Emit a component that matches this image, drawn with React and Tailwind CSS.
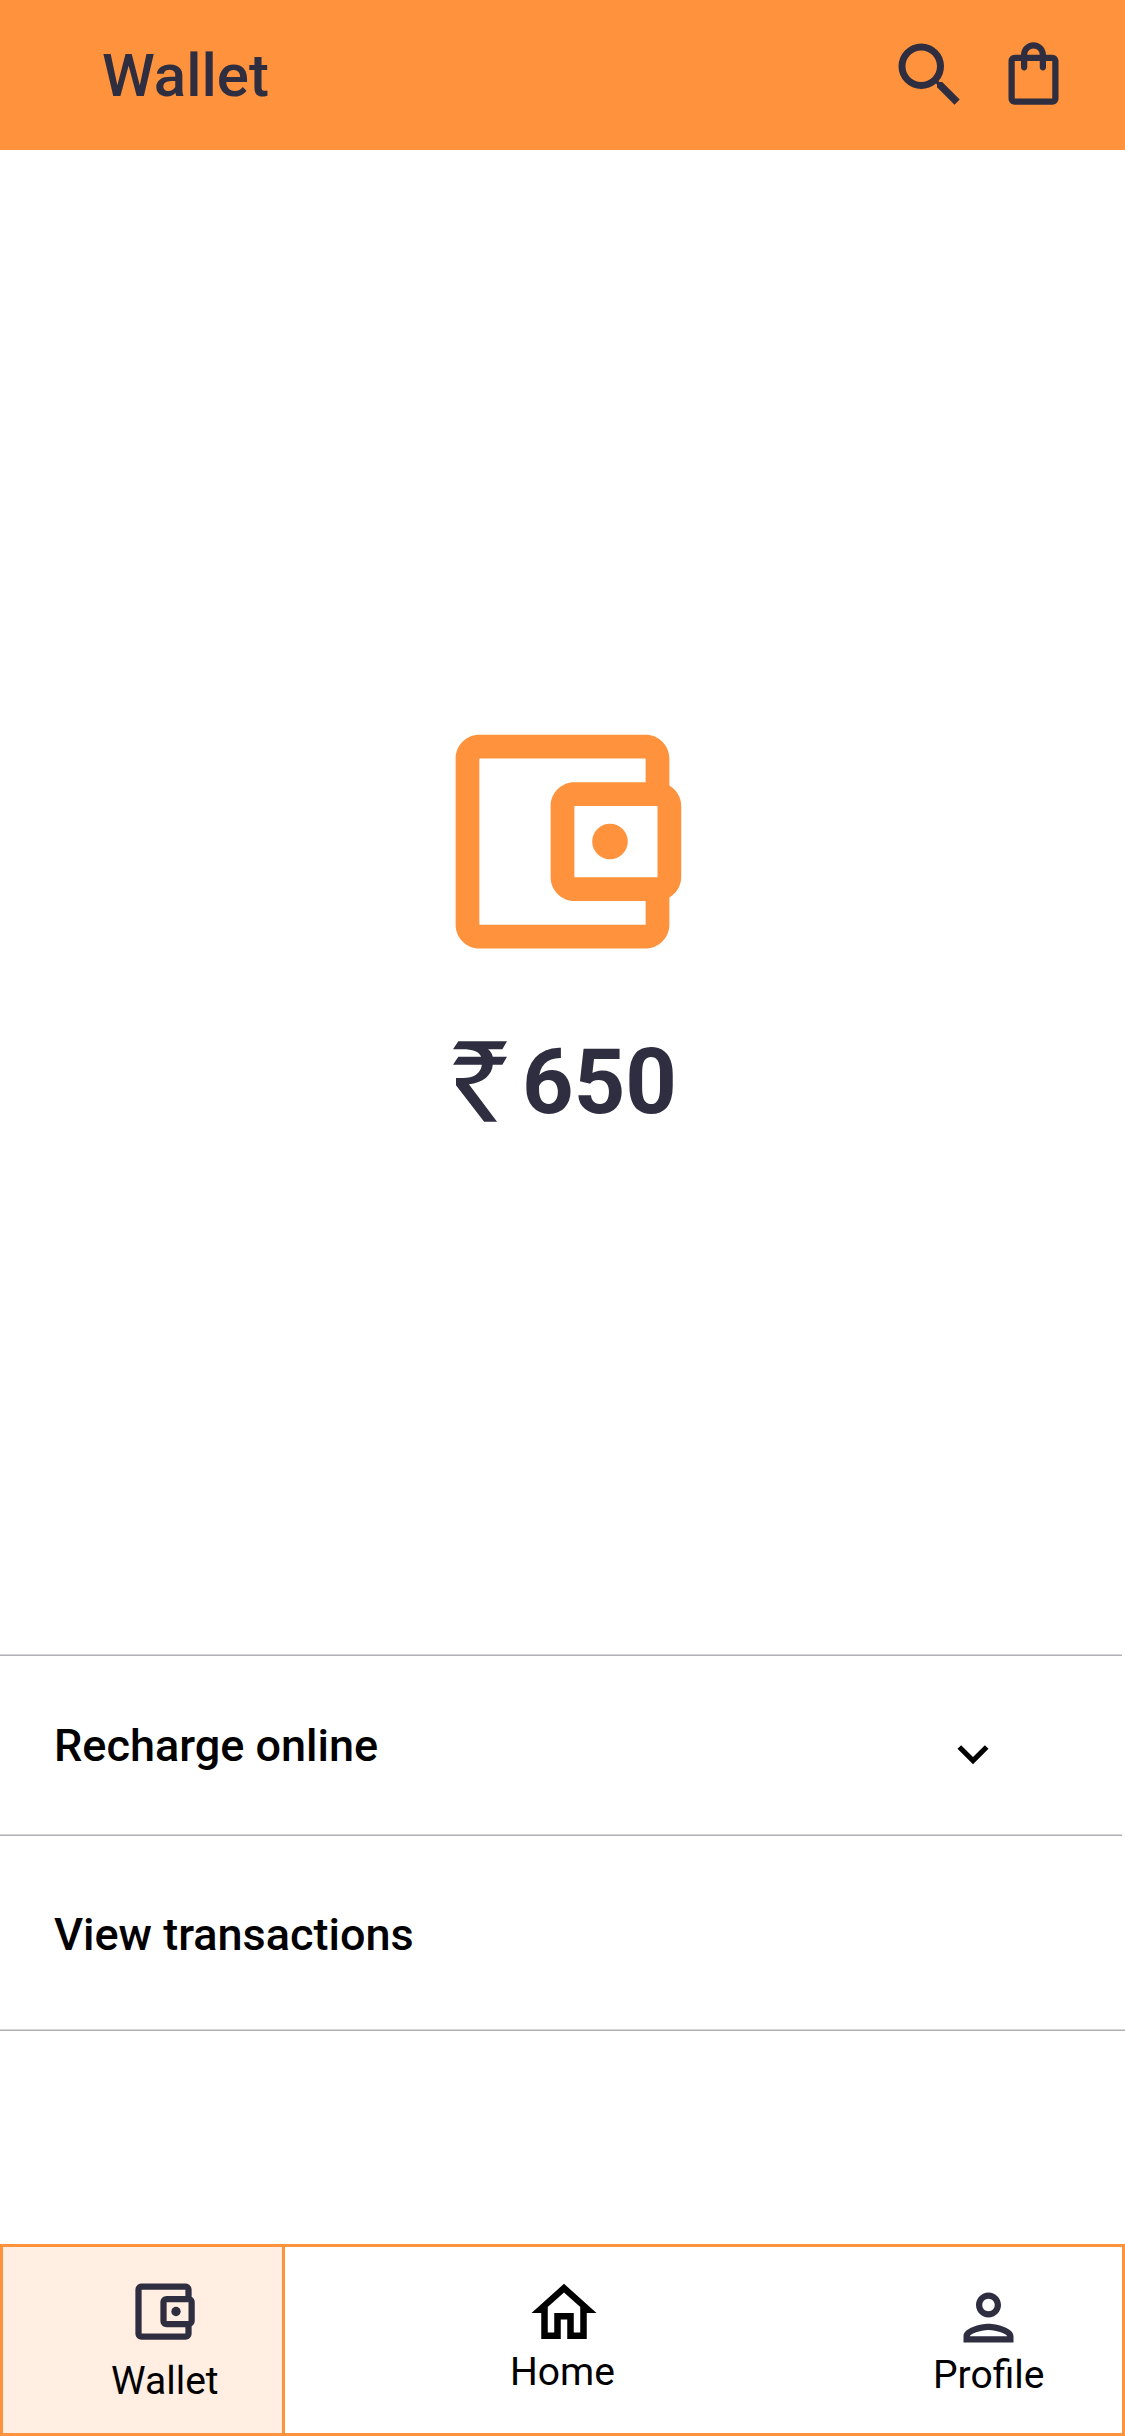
import React from 'react';

const WalletIcon = ({ className }) => (
    <svg viewBox="0 0 24 24" fill="currentColor" className={className}>
        <path d="M21 7.28V5c0-1.1-.9-2-2-2H5c-1.11 0-2 .9-2 2v14c0 1.1.89 2 2 2h14c1.1 0 2-.9 2-2v-2.28c.59-.35 1-.98 1-1.72V9c0-.74-.41-1.38-1-1.72zM20 9v6h-7V9h7zM5 19V5h14v2h-6c-1.1 0-2 .9-2 2v6c0 1.1.9 2 2 2h6v2H5z" />
        <circle cx="16" cy="12" r="1.5" />
    </svg>
);

const SearchIcon = ({ className }) => (
    <svg viewBox="0 0 24 24" fill="currentColor" className={className}>
        <path d="M15.5 14h-.79l-.28-.27A6.471 6.471 0 0 0 16 9.5 6.5 6.5 0 1 0 9.5 16c1.61 0 3.09-.59 4.23-1.57l.27.28v.79l5 4.99L20.49 19l-4.99-5zm-6 0C7.01 14 5 11.99 5 9.5S7.01 5 9.5 5 14 7.01 14 9.5 11.99 14 9.5 14z" />
    </svg>
);

const BagIcon = ({ className }) => (
    <svg viewBox="0 0 24 24" fill="currentColor" className={className}>
        <path d="M18 6h-2c0-2.21-1.79-4-4-4S8 3.79 8 6H6c-1.1 0-2 .9-2 2v12c0 1.1.9 2 2 2h12c1.1 0 2-.9 2-2V8c0-1.1-.9-2-2-2zm-6-2c1.1 0 2 .9 2 2h-4c0-1.1.9-2 2-2zm6 16H6V8h2v2c0 .55.45 1 1 1s1-.45 1-1V8h4v2c0 .55.45 1 1 1s1-.45 1-1V8h2v12z" />
    </svg>
);

const HomeIcon = ({ className }) => (
    <svg viewBox="0 0 24 24" fill="currentColor" className={className}>
        <path d="m12 5.69 5 4.5V18h-2v-6H9v6H7v-7.81l5-4.5M12 3 2 12h3v8h6v-6h2v6h6v-8h3L12 3z" />
    </svg>
);

const ProfileIcon = ({ className }) => (
    <svg viewBox="0 0 24 24" fill="currentColor" className={className}>
        <path d="M12 6c1.1 0 2 .9 2 2s-.9 2-2 2-2-.9-2-2 .9-2 2-2m0-2C9.79 4 8 5.79 8 8s1.79 4 4 4 4-1.79 4-4-1.79-4-4-4zM12 16c2.69 0 5.77 1.28 6 2H6c.2-.71 3.3-2 6-2m0-2c-2.67 0-8 1.34-8 4v2h16v-2c0-2.66-5.33-4-8-4z" />
    </svg>
);

const ChevronIcon = ({ className }) => (
    <svg viewBox="0 0 24 24" fill="currentColor" className={className}>
        <path d="M7.41 8.59 12 13.17l4.59-4.58L18 10l-6 6-6-6z" />
    </svg>
);

const RupeeIcon = ({ className }) => (
    <svg viewBox="0 0 163 243" fill="currentColor" className={className} role="img" aria-label="Rupees">
        <path d="M16 0H163L149 24H106C113 30 118 37 120 47H163L149 71H120C118 102 90 126 48 130L133 243H94L9 133V111H30C62 111 84 98 87 71H0L16 47H85C79 30 58 24 30 24H0Z" />
    </svg>
);

const Divider = ({ className }) => (
    <div className={`h-[2px] border-t border-b border-t-[#d5d5d9] border-b-[#b1b1b7] ${className}`} />
);

const App = () => {
    return (
        <div className="w-[1125px] h-[2436px] flex flex-col bg-white font-['Roboto',sans-serif] text-black">
            {/* Header */}
            <header className="h-[150px] flex items-center bg-[#ff933d] text-[#2f2e41] pl-[102px]">
                <h1 className="mt-[2px] text-[60px] leading-[70px] font-medium">Wallet</h1>
                <div className="ml-auto flex items-center gap-6 pr-[54px]">
                    <SearchIcon className="w-[84px] h-[84px]" />
                    <BagIcon className="w-[75px] h-[75px] mt-[-3px]" />
                </div>
            </header>

            {/* Balance */}
            <main className="h-[1504px] pt-[548.5px]">
                <WalletIcon className="w-[285px] h-[285px] ml-[420px] text-[#ff933d]" />
                <div className="mt-[53.5px] pl-[453px] flex items-start gap-[15px] text-[#2f2e41]">
                    <RupeeIcon className="w-[54px] h-[81px] mt-1" />
                    <span className="mt-px text-[90px] leading-[90px] font-bold">650</span>
                </div>
            </main>

            {/* Actions */}
            <Divider className="w-[1122px]" />
            <div className="h-[178px] flex items-start justify-between pl-[54px] pr-[121.5px]">
                <span className="mt-[63px] text-[45px] leading-[54px] font-medium">Recharge online</span>
                <ChevronIcon className="w-[62px] h-[62px] mt-[66.5px]" />
            </div>
            <Divider className="w-[1122px]" />
            <div className="h-[193px] pl-[54px] pt-[72px]">
                <span className="block text-[45px] leading-[54px] font-medium">View transactions</span>
            </div>
            <Divider className="w-full" />

            {/* Bottom navigation */}
            <nav className="mt-auto h-[192px] flex border-[3px] border-[#ff933d] text-[39px] leading-[40px]">
                <div className="w-[282px] pt-[27px] pl-[108px] border-r-[3px] border-[#ff933d] bg-[#ffeee1]">
                    <WalletIcon className="w-[75px] h-[75px] ml-[15px] text-[#2f2e41]" />
                    <div className="mt-3">Wallet</div>
                </div>
                <div className="w-[555px] pt-[27px] pl-[225px]">
                    <HomeIcon className="w-[78px] h-[78px] ml-[15px]" />
                    <div>Home</div>
                </div>
                <div className="flex-1 pt-[33px] pl-[93px]">
                    <ProfileIcon className="w-[75px] h-[75px] ml-[18px] text-[#2f2e41]" />
                    <div>Profile</div>
                </div>
            </nav>
        </div>
    );
};

export default App;
